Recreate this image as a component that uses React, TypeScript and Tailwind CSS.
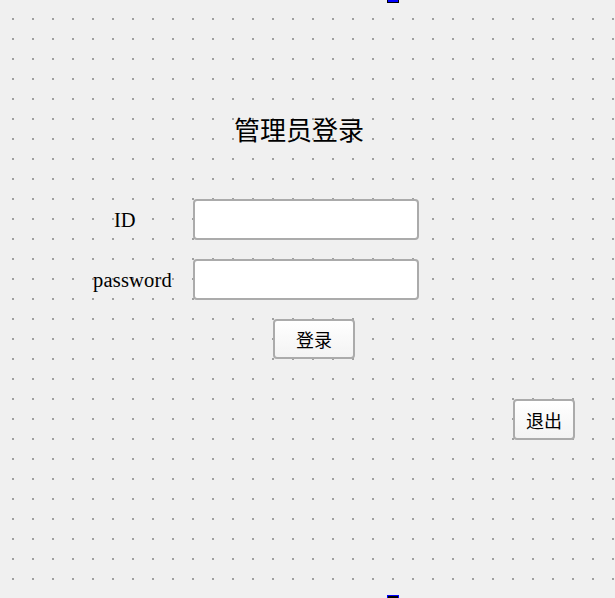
export default function App() {
  return (
    <div className="relative w-[615px] h-[598px] overflow-hidden bg-[#f0f0f0] bg-[conic-gradient(at_2px_2px,transparent_75%,#a0a0a0_0)] bg-size-[20px_20px] bg-position-[12px_18px] text-black">
      {/* resize handles */}
      <div className="absolute left-[387px] top-0 w-[12px] h-[3px] bg-[#0000ff] border border-t-0 border-black" />
      <div className="absolute left-[387px] bottom-0 w-[12px] h-[3px] bg-black border border-b-0 border-[#0000ff]" />

      <div className="flex flex-col items-start">
        <div className="ml-[234px] mt-[116px] text-[26px] leading-[26px] font-['Noto_Sans_CJK_SC',sans-serif]">
          管理员登录
        </div>

        <div className="mt-[57px] flex items-center h-[41px]">
          <span className="w-[193px] pl-[114px] pt-[2px] text-[20.5px] leading-none font-['Liberation_Serif',serif]">ID</span>
          <input className="w-[226px] h-[41px] rounded-[4px] border-2 border-[#ababab] bg-white outline-none" />
        </div>

        <div className="mt-[19px] flex items-center h-[41px]">
          <span className="w-[193px] pl-[93px] pt-[2px] text-[20.5px] leading-none tracking-[0.2px] font-['Liberation_Serif',serif]">password</span>
          <input type="password" className="w-[226px] h-[41px] rounded-[4px] border-2 border-[#ababab] bg-white outline-none" />
        </div>

        <button className="ml-[273px] mt-[19px] w-[82px] h-[40px] rounded-[4px] border-2 border-[#ababab] bg-linear-to-b from-white to-[#f3f3f3] text-[18px] leading-none font-['Noto_Sans_CJK_SC',sans-serif]">
          登录
        </button>

        <button className="ml-[513px] mt-[40px] w-[62px] h-[41px] rounded-[4px] border-2 border-[#ababab] bg-linear-to-b from-white to-[#f3f3f3] text-[18px] leading-none font-['Noto_Sans_CJK_SC',sans-serif]">
          退出
        </button>
      </div>
    </div>
  );
}
